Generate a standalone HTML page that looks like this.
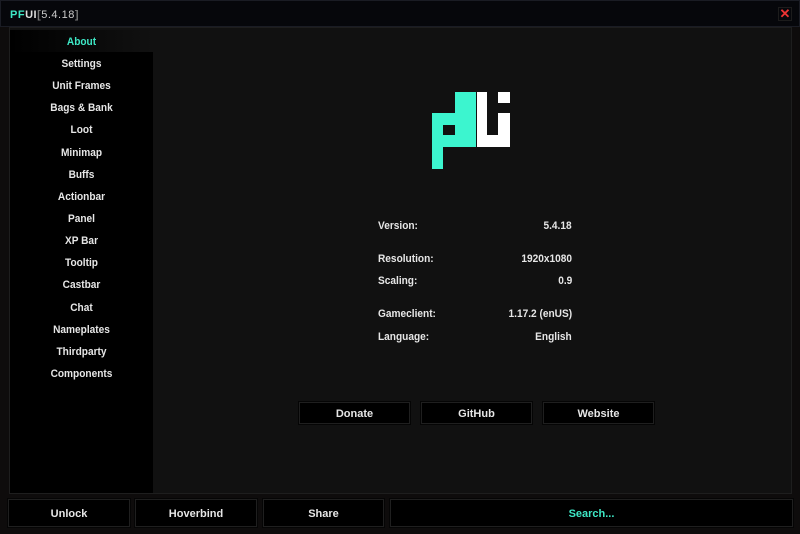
<!DOCTYPE html>
<html><head><meta charset="utf-8"><style>
*{margin:0;padding:0;box-sizing:border-box}
body{width:800px;height:534px;background:#0e0c0c;position:relative;overflow:hidden;font-family:"Liberation Sans Narrow","Liberation Sans",sans-serif;font-weight:bold;font-size:11px;color:#e6e6e6}
.a{position:absolute}
.title{left:0;top:0;width:800px;height:27px;background:#06070b;border:1px solid #1a1c24}
.panel{left:9px;top:27px;width:783px;height:467px;background:#111;border:1px solid #1e1e1e}
.side{left:10px;top:52px;width:143px;height:441px;background:#000}
.sel{left:10px;top:30px;width:143px;height:22px;background:linear-gradient(90deg,#000,#111)}
.item{left:10px;width:143px;text-align:center;height:14px;line-height:14px;transform:scaleX(0.92)}
.btn{background:#000;border:1px solid #1f1f1f;text-align:center;position:absolute;outline:1px solid #050505}
.lbl{left:378px;transform-origin:left;transform:scaleX(0.92)}
.val{right:228px;text-align:right;transform-origin:right;transform:scaleX(0.92)}
</style></head><body>
<div class="a title"></div>
<div class="a" style="left:10px;top:9px;font-size:11px;letter-spacing:0.5px"><span style="color:#3ee8c6">PF</span><span style="color:#ddd">UI</span><span style="color:#777">[</span><span style="color:#ccc;font-weight:normal">5.4.18</span><span style="color:#777">]</span></div>
<div class="a" style="left:778px;top:7px;width:14px;height:14px;border:1px solid #1c1c1c;color:#e33;font-size:13px;line-height:12px;text-align:center">✕</div>
<div class="a panel"></div>
<div class="a sel"></div>
<div class="a side"></div>
<div class="a item" style="top:35px;color:#3ee8c6">About</div>
<div class="a item" style="top:57px">Settings</div>
<div class="a item" style="top:79px">Unit Frames</div>
<div class="a item" style="top:101px">Bags &amp; Bank</div>
<div class="a item" style="top:123px">Loot</div>
<div class="a item" style="top:146px">Minimap</div>
<div class="a item" style="top:168px">Buffs</div>
<div class="a item" style="top:190px">Actionbar</div>
<div class="a item" style="top:212px">Panel</div>
<div class="a item" style="top:234px">XP Bar</div>
<div class="a item" style="top:256px">Tooltip</div>
<div class="a item" style="top:278px">Castbar</div>
<div class="a item" style="top:301px">Chat</div>
<div class="a item" style="top:323px">Nameplates</div>
<div class="a item" style="top:345px">Thirdparty</div>
<div class="a item" style="top:367px">Components</div>
<svg class="a" style="left:0;top:0" width="800" height="534">
<g fill="#3cf5cf">
<rect x="432" y="113" width="11" height="56"/>
<rect x="432" y="113" width="44" height="12"/>
<rect x="455" y="92" width="21" height="55"/>
<rect x="432" y="135" width="44" height="12"/>
</g>
<g fill="#fff">
<rect x="477" y="92" width="10" height="55"/>
<rect x="477" y="135" width="33" height="12"/>
<rect x="498" y="113" width="12" height="34"/>
<rect x="498" y="92" width="12" height="11"/>
</g>
</svg>
<div class="a lbl" style="top:220px">Version:</div><div class="a val" style="top:220px">5.4.18</div>
<div class="a lbl" style="top:253px">Resolution:</div><div class="a val" style="top:253px">1920x1080</div>
<div class="a lbl" style="top:275px">Scaling:</div><div class="a val" style="top:275px">0.9</div>
<div class="a lbl" style="top:308px">Gameclient:</div><div class="a val" style="top:308px">1.17.2 (enUS)</div>
<div class="a lbl" style="top:331px">Language:</div><div class="a val" style="top:331px">English</div>
<div class="btn" style="left:299px;top:402px;width:111px;height:22px;line-height:22px">Donate</div>
<div class="btn" style="left:421px;top:402px;width:111px;height:22px;line-height:22px">GitHub</div>
<div class="btn" style="left:543px;top:402px;width:111px;height:22px;line-height:22px">Website</div>
<div class="btn" style="left:8px;top:499px;width:122px;height:28px;line-height:28px">Unlock</div>
<div class="btn" style="left:135px;top:499px;width:122px;height:28px;line-height:28px">Hoverbind</div>
<div class="btn" style="left:263px;top:499px;width:121px;height:28px;line-height:28px">Share</div>
<div class="btn" style="left:390px;top:499px;width:403px;height:28px;line-height:28px;color:#3ee8c6">Search...</div>
</body></html>
